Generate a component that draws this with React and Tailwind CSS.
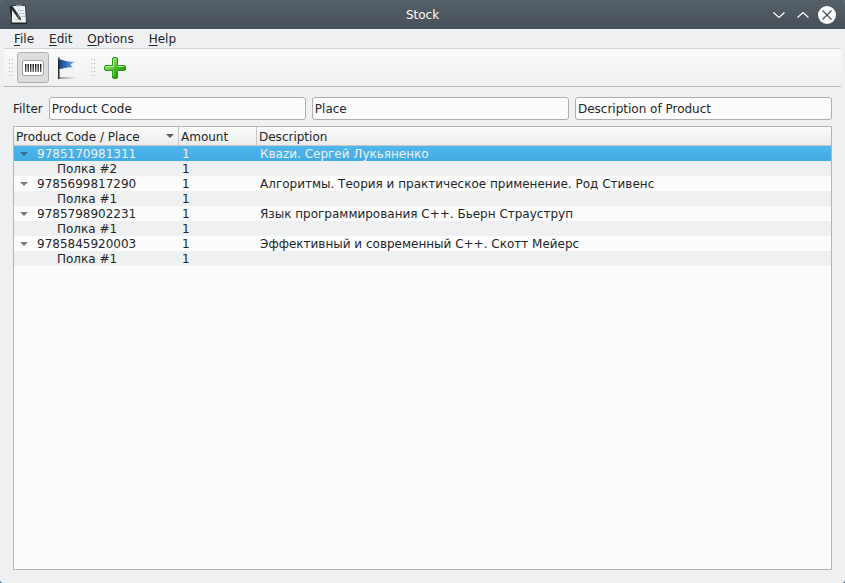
import { useState } from "react";

const PRODUCTS = [
  { code: "9785170981311", amount: 1, description: "Кваzи. Сергей Лукьяненко", place: "Полка #2" },
  { code: "9785699817290", amount: 1, description: "Алгоритмы. Теория и практическое применение. Род Стивенс", place: "Полка #1" },
  { code: "9785798902231", amount: 1, description: "Язык программирования C++. Бьерн Страуструп", place: "Полка #1" },
  { code: "9785845920003", amount: 1, description: "Эффективный и современный C++. Скотт Мейерс", place: "Полка #1" },
];

const FILTERS = [
  { id: "filter-code", label: "Product code filter", value: "Product Code" },
  { id: "filter-place", label: "Place filter", value: "Place" },
  { id: "filter-description", label: "Description filter", value: "Description of Product" },
];

function AppIcon() {
  return (
    <svg width="22" height="22" viewBox="0 0 22 22" aria-hidden="true">
      <path d="M3.500 1.500H17.500L18.500 19H3.500Z" fill="#eef1f4" stroke="#33393d" strokeWidth="1" />
      <path d="M3 19.500H19" stroke="#23282b" strokeWidth="1.200" />
      <path d="M10 6.500h6M11 9.500h5.500M13 12.500h4M7 15.500h3" stroke="#a9cbe4" strokeWidth="1" />
      <path d="M8 1.500h6" stroke="#8d959a" strokeWidth="1.400" />
      <path d="M1.500 2.500L4.500 2L12.500 13.500L13 16.500L10.500 15Z" fill="#2a2b2b" />
      <path d="M2 2.500L3.500 12" stroke="#1d2124" strokeWidth="1.200" />
      <path d="M9 10.500L11.500 14" stroke="#a38a5c" strokeWidth="1" />
    </svg>
  );
}

function BarcodeIcon() {
  return (
    <svg width="22" height="16" viewBox="0 0 22 16" aria-hidden="true">
      <defs>
        <linearGradient id="bars" x1="0" y1="0" x2="0" y2="1">
          <stop offset="0" stopColor="#111" />
          <stop offset="1" stopColor="#666" />
        </linearGradient>
      </defs>
      <rect x="0.5" y="0.5" width="21" height="15" rx="1.5" fill="#fff" stroke="#a3a3a3" />
      <g fill="url(#bars)">
        {[3, 5.5, 8, 10.5, 13, 15.5, 18].map((x) => (
          <rect key={x} x={x} y="4" width="1.4" height="8" />
        ))}
      </g>
    </svg>
  );
}

function FlagIcon() {
  return (
    <svg width="22" height="22" viewBox="0 0 22 22" aria-hidden="true">
      <defs>
        <linearGradient id="flag" x1="0" y1="0" x2="1" y2="0">
          <stop offset="0" stopColor="#174684" />
          <stop offset="0.5" stopColor="#3474ba" />
          <stop offset="1" stopColor="#86b4e4" />
        </linearGradient>
        <linearGradient id="shade" x1="0" y1="0" x2="1" y2="0">
          <stop offset="0" stopColor="#999" />
          <stop offset="1" stopColor="#999" stopOpacity="0" />
        </linearGradient>
      </defs>
      <rect x="5" y="20" width="17" height="2" fill="url(#shade)" />
      <path d="M5 2.500C9 2.500 12 5.500 21 4.500L16.500 7.500L19 10.500C13 9.500 10 12 5 12Z" fill="url(#flag)" />
      <rect x="4" y="1" width="1.500" height="21" fill="#25292c" />
      <rect x="4" y="0" width="1.500" height="2" fill="#777" />
    </svg>
  );
}

function AddIcon() {
  return (
    <svg width="22" height="22" viewBox="0 0 22 22" aria-hidden="true">
      <defs>
        <linearGradient id="plus" x1="0" y1="0" x2="1" y2="1">
          <stop offset="0.2" stopColor="#a2e47c" />
          <stop offset="0.5" stopColor="#4cc02a" />
          <stop offset="0.8" stopColor="#239a0c" />
        </linearGradient>
      </defs>
      <path
        d="M10 0.500h2q1.500 0 1.500 1.500v6.500h6.500q1.500 0 1.500 1.500v2q0 1.500-1.500 1.500h-6.500v6.500q0 1.500-1.500 1.500h-2q-1.500 0-1.500-1.500v-6.500h-6.500q-1.500 0-1.500-1.500v-2q0-1.500 1.500-1.500h6.500v-6.500q0-1.500 1.500-1.500Z"
        fill="url(#plus)"
        stroke="#2b9618"
      />
      <path d="M9.500 9.500v-7.500M2 9.500h7.500M13.500 9.500h6" stroke="#c9f5b0" strokeOpacity="0.8" fill="none" />
      <path d="M9.500 13.500v5.500" stroke="#9be878" strokeOpacity="0.7" />
    </svg>
  );
}

function Grip() {
  return (
    <svg width="4" height="17" viewBox="0 0 4 17" fill="#b4b6b8" aria-hidden="true">
      {[0, 4, 8, 12, 16].map((y) => (
        <g key={y}>
          <rect x="0" y={y} width="1" height="1" />
          <rect x="3" y={y} width="1" height="1" />
        </g>
      ))}
    </svg>
  );
}

function Triangle() {
  return (
    <svg width="8" height="4" viewBox="0 0 8 4" aria-hidden="true">
      <path d="M0 0H8L4 4Z" fill="currentColor" />
    </svg>
  );
}

function TitleBar() {
  return (
    <header className="grid h-[29px] grid-cols-[1fr_auto_1fr] items-center rounded-t-[3px] bg-linear-to-b from-[#566069] to-[#475057] px-2 text-[#fcfcfc]">
      <AppIcon />
      <h1>Stock</h1>
      <div className="flex items-center justify-end gap-1">
        <button aria-label="Minimize" className="flex size-5 items-center justify-center">
          <svg width="12" height="6" viewBox="0 0 12 6" fill="none" stroke="currentColor" strokeWidth="1.2">
            <path d="M0.500 0.500L6 5.500L11.500 0.500" />
          </svg>
        </button>
        <button aria-label="Maximize" className="flex size-5 items-center justify-center">
          <svg width="12" height="6" viewBox="0 0 12 6" fill="none" stroke="currentColor" strokeWidth="1.2">
            <path d="M0.500 5.500L6 0.500L11.500 5.500" />
          </svg>
        </button>
        <button aria-label="Close" className="flex size-5 items-center justify-center">
          <svg width="18" height="18" viewBox="0 0 18 18">
            <circle cx="9" cy="9" r="9" fill="#fcfcfc" />
            <path d="M4.500 4.500L13.500 13.500M13.500 4.500L4.500 13.500" stroke="#475057" strokeWidth="1.200" />
          </svg>
        </button>
      </div>
    </header>
  );
}

function MenuBar() {
  return (
    <nav className="flex h-[19px] items-center gap-[15px] px-[14px] pt-px">
      {["File", "Edit", "Options", "Help"].map((name) => (
        <button key={name}>
          <span className="underline underline-offset-2">{name[0]}</span>
          {name.slice(1)}
        </button>
      ))}
    </nav>
  );
}

function ToolBar() {
  const [barcode, setBarcode] = useState(true);
  return (
    <div
      role="toolbar"
      aria-label="Main toolbar"
      className="mx-1 flex h-[39px] items-center border-t border-b border-t-[#d3d5d6] border-b-[#b5b7b9] bg-linear-to-b from-[#f9fafb] to-[#eff0f1] pl-[5px]"
    >
      <Grip />
      <button
        aria-label="Barcode"
        aria-pressed={barcode}
        onClick={() => setBarcode(!barcode)}
        className="ml-1 flex h-[31px] w-8 items-center justify-center rounded-[3px] border border-transparent aria-pressed:border-[#aeb0b1] aria-pressed:bg-[#dcdddd]"
      >
        <BarcodeIcon />
      </button>
      <button aria-label="Places" className="mr-[10px] flex h-[31px] w-8 items-center justify-center">
        <FlagIcon />
      </button>
      <Grip />
      <button aria-label="Add" className="ml-1 flex h-[31px] w-8 items-center justify-center">
        <AddIcon />
      </button>
    </div>
  );
}

function ProductRows({ product, selected, onSelect }) {
  const [open, setOpen] = useState(true);
  return (
    <>
      <tr
        aria-selected={selected}
        onClick={onSelect}
        className="h-[15px] text-[#232629] aria-selected:bg-linear-to-b aria-selected:from-[#50b6ec] aria-selected:to-[#40ace4] aria-selected:text-[#eff0f1]"
      >
        <td className="p-0">
          <div className="flex items-center gap-[9px] pl-[6px]">
            <button
              aria-label={"Toggle " + product.code}
              aria-expanded={open}
              onClick={() => setOpen(!open)}
              className={selected ? "text-[#35708f]" : "text-[#77797b]"}
            >
              <Triangle />
            </button>
            <span className="pt-px">{product.code}</span>
          </div>
        </td>
        <td className="p-0 pt-px pl-[3px]">{product.amount}</td>
        <td className="p-0 pt-px pl-[3px]">{product.description}</td>
      </tr>
      {open && (
        <tr className="h-[15px] bg-[#eff0f1]">
          <td className="p-0 pt-px pl-[43px]">{product.place}</td>
          <td className="p-0 pt-px pl-[3px]">{product.amount}</td>
          <td className="p-0" />
        </tr>
      )}
    </>
  );
}

export default function App() {
  const [selected, setSelected] = useState(0);
  return (
    <div className="bg-[#174b70]">
      <div className="flex min-h-screen flex-col rounded-[3px] bg-[#eff0f1] font-['DejaVu_Sans',sans-serif] text-[12px] leading-[14px] text-[#232629]">
        <TitleBar />
        <MenuBar />
        <ToolBar />
        <main className="flex grow flex-col gap-[6px] px-[13px] pt-[10px] pb-[13px]">
          <div className="flex items-center gap-[6px]">
            <label htmlFor="filter-code" className="pt-px">
              Filter
            </label>
            {FILTERS.map((filter) => (
              <input
                key={filter.id}
                id={filter.id}
                aria-label={filter.label}
                defaultValue={filter.value}
                className="h-[23px] w-0 grow rounded-[3px] border border-[#adaeb0] bg-[#fcfcfc] px-[2px] outline-none"
              />
            ))}
          </div>
          <div className="grow border border-[#b4b5b6] bg-[#fcfcfc]">
            <table className="w-full table-fixed border-separate border-spacing-0 text-left whitespace-nowrap">
              <colgroup>
                <col className="w-[165px]" />
                <col className="w-[78px]" />
                <col />
              </colgroup>
              <thead>
                <tr className="h-[19px] bg-linear-to-b from-[#fcfcfc] to-[#ebebec]">
                  <th className="border-r border-b border-[#c5c6c7] p-0 pl-[2px] font-normal" aria-sort="descending">
                    <div className="flex items-center justify-between pr-[4px]">
                      <span className="pt-[2px]">Product Code / Place</span>
                      <span className="text-[#5c5e60]">
                        <Triangle />
                      </span>
                    </div>
                  </th>
                  <th className="border-r border-b border-[#c5c6c7] p-0 pt-[2px] pl-[2px] font-normal">Amount</th>
                  <th className="border-b border-[#c5c6c7] p-0 pt-[2px] pl-[2px] font-normal">Description</th>
                </tr>
              </thead>
              <tbody>
                {PRODUCTS.map((product, index) => (
                  <ProductRows
                    key={product.code}
                    product={product}
                    selected={index === selected}
                    onSelect={() => setSelected(index)}
                  />
                ))}
              </tbody>
            </table>
          </div>
        </main>
      </div>
    </div>
  );
}
